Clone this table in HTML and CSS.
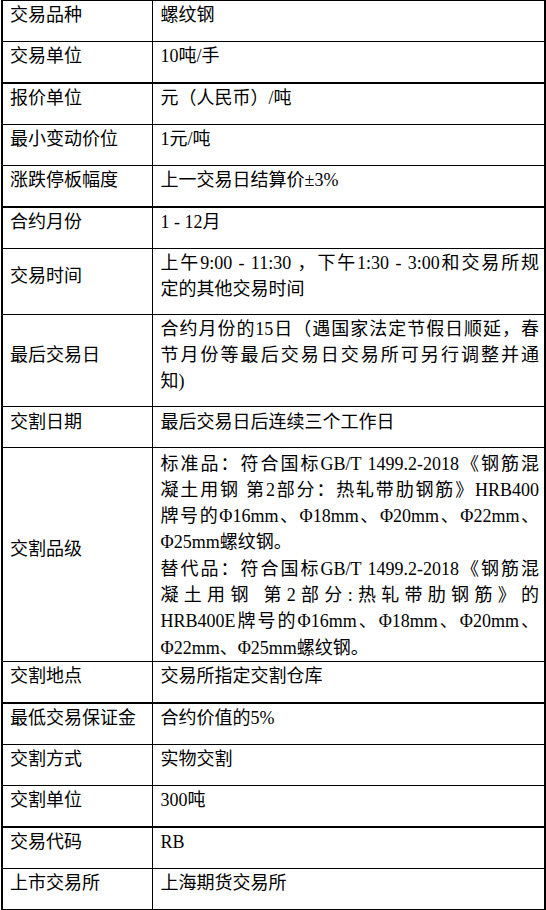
FILE: index.html
```html
<!DOCTYPE html>
<html lang="zh-CN">
<head>
<meta charset="utf-8">
<title>螺纹钢期货合约</title>
<link rel="stylesheet" href="styles.css">
</head>
<body>
<table class="spec">
  <colgroup><col class="c-label"><col class="c-value"></colgroup>
  <tbody>
    <tr><td class="k">交易品种</td><td class="v">螺纹钢</td></tr>
    <tr><td class="k">交易单位</td><td class="v">10吨/手</td></tr>
    <tr class="thick"><td class="k">报价单位</td><td class="v">元（人民币）/吨</td></tr>
    <tr><td class="k">最小变动价位</td><td class="v">1元/吨</td></tr>
    <tr><td class="k">涨跌停板幅度</td><td class="v">上一交易日结算价±3%</td></tr>
    <tr class="thick"><td class="k">合约月份</td><td class="v">1 - 12月</td></tr>
    <tr><td class="k">交易时间</td><td class="v"><span class="jl">上午9:00 - 11:30 ，下午1:30 - 3:00和交易所规</span><span class="ll">定的其他交易时间</span></td></tr>
    <tr><td class="k">最后交易日</td><td class="v"><span class="jl">合约月份的15日（遇国家法定节假日顺延，春</span><span class="jl">节月份等最后交易日交易所可另行调整并通</span><span class="ll">知)</span></td></tr>
    <tr><td class="k">交割日期</td><td class="v">最后交易日后连续三个工作日</td></tr>
    <tr><td class="k">交割品级</td><td class="v tight"><span class="jl">标准品：符合国标GB/T 1499.2-2018《钢筋混</span><span class="jl">凝土用钢 第2部分：热轧带肋钢筋》HRB400</span><span class="jl">牌号的Φ16mm、Φ18mm、Φ20mm、Φ22mm、</span><span class="ll">Φ25mm螺纹钢。</span><span class="jl">替代品：符合国标GB/T 1499.2-2018《钢筋混</span><span class="jl">凝土用钢 第2部分:热轧带肋钢筋》的</span><span class="jl">HRB400E牌号的Φ16mm、Φ18mm、Φ20mm、</span><span class="ll">Φ22mm、Φ25mm螺纹钢。</span></td></tr>
    <tr><td class="k">交割地点</td><td class="v">交易所指定交割仓库</td></tr>
    <tr class="thick"><td class="k">最低交易保证金</td><td class="v">合约价值的5%</td></tr>
    <tr><td class="k">交割方式</td><td class="v">实物交割</td></tr>
    <tr><td class="k">交割单位</td><td class="v">300吨</td></tr>
    <tr class="thick"><td class="k">交易代码</td><td class="v">RB</td></tr>
    <tr><td class="k">上市交易所</td><td class="v">上海期货交易所</td></tr>
  </tbody>
</table>
</body>
</html>
```
FILE: styles.css
```css
html, body {
  margin: 0;
  padding: 0;
  background: #fff;
}

body {
  font-family: "Liberation Serif", "Noto Sans CJK SC", serif;
  font-size: 18px;
  line-height: 25.6px;
  color: #000;
}

.spec {
  border-collapse: collapse;
  table-layout: fixed;
  width: 543px;
  margin: 0 0 0 1px;
  border-top: 1px solid #000;
  border-bottom: 1px solid #000;
  border-left: 2px solid #000;
  border-right: 2px solid #000;
}

.c-label { width: 150px; }
.c-value { width: 393px; }

.spec td {
  border: 1px solid #000;
  padding: 2.3px 5px 12.05px 8px;
  vertical-align: middle;
  text-align: justify;
}

.spec td.k {
  padding-left: 7px;
  white-space: nowrap;
}

.spec tr.thick td {
  border-top: 2px solid #000;
}

.spec td.tight {
  padding-bottom: 0;
  line-height: 26.3px;
  vertical-align: top;
}

.jl {
  display: block;
  text-align: justify;
  text-align-last: justify;
  white-space: nowrap;
}

.ll {
  display: block;
  text-align: left;
  white-space: nowrap;
}
```
